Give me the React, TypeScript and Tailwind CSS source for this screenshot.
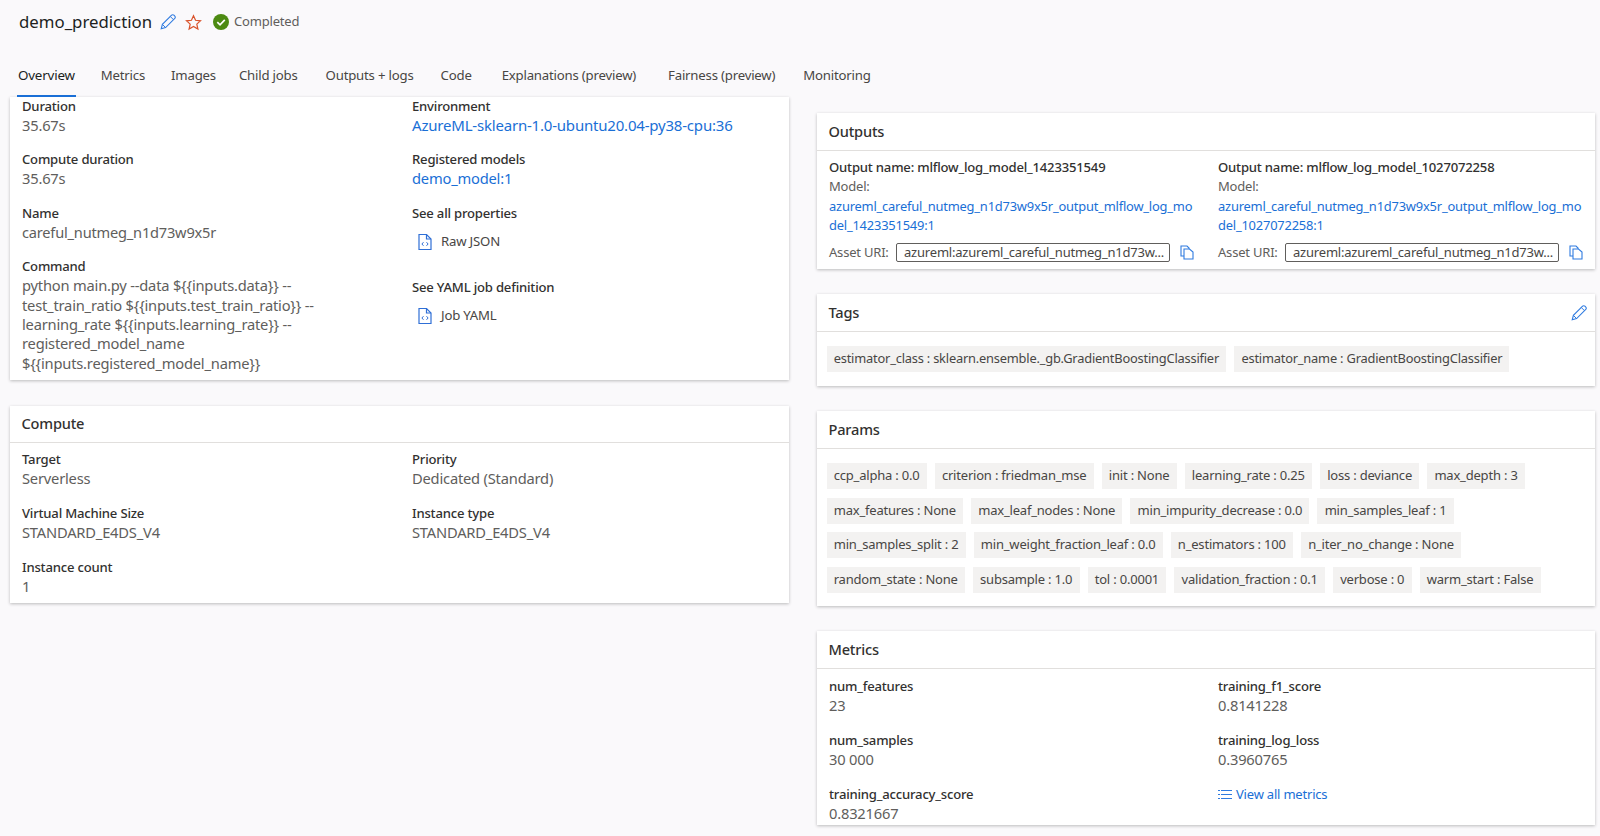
import React from "react";

const FileCode = () => (
  <svg width="16" height="18" viewBox="0 0 16 18" fill="none" className="shrink-0">
    <path d="M2 1.5h7.5l4.5 4.5v10.5H2z" stroke="#2f6fd6" strokeWidth="1.2" />
    <path d="M9.5 1.5V6H14" stroke="#2f6fd6" strokeWidth="1.2" />
    <path d="M6.5 9.2 4.9 11l1.6 1.8M9.5 9.2l1.6 1.8-1.6 1.8" stroke="#2f6fd6" strokeWidth="1" />
  </svg>
);

const CopyIcon = () => (
  <svg width="14" height="15" viewBox="0 0 14 15" fill="none" className="shrink-0">
    <path d="M1 1h6l2 2v8H1z" stroke="#2f7be0" strokeWidth="1.1" fill="#fff" />
    <path d="M4 4h5.5L13 7v7H4z" stroke="#2f7be0" strokeWidth="1.1" fill="#fff" />
  </svg>
);

const PencilIcon = ({ size = 16 }: { size?: number }) => (
  <svg width={size} height={size} viewBox="0 0 16 16" fill="none">
    <path d="M1.2 14.8 2.4 10.4 11.6 1.2a1.6 1.6 0 0 1 2.3 0l.9.9a1.6 1.6 0 0 1 0 2.3L5.6 13.6z" stroke="#2f7be0" strokeWidth="1.1" />
    <path d="M10.4 2.6l3 3M2.4 10.4l3.2 3.2" stroke="#2f7be0" strokeWidth="1" />
  </svg>
);

const F = ({ label, children, v = "text-[14.7px]" }: { label: string; children: React.ReactNode; v?: string }) => (
  <div>
    <div className="text-[13.1px] leading-[19px] font-medium text-[#323130]">{label}</div>
    <div className={`${v} leading-[19.4px] text-[#605e5c]`}>{children}</div>
  </div>
);

const Link = ({ children }: { children: React.ReactNode }) => (
  <span className="text-[#1a6fd6]">{children}</span>
);

const Card = ({ title, children, action, head = "h-[38px] pt-[1px]" }: { title: string; children: React.ReactNode; action?: React.ReactNode; head?: string }) => (
  <section className="bg-white shadow-[0_1px_3px_rgba(0,0,0,0.25)]">
    <div className={`${head} flex items-center justify-between pl-[11.5px] pr-[8px] border-b border-[#e1dfdd] text-[14.6px] font-medium text-[#323130]`}>
      <span>{title}</span>
      {action}
    </div>
    {children}
  </section>
);

const Chip = ({ children, s = "text-[13px]" }: { children: React.ReactNode; s?: string }) => (
  <span className={`h-[26px] flex items-center px-[7.2px] bg-[#f3f2f1] ${s} text-[#484644] whitespace-nowrap`}>{children}</span>
);

const tabs = ["Metrics", "Images", "Child jobs", "Outputs + logs", "Code", "Explanations (preview)", "Fairness (preview)", "Monitoring"];
const tabGaps = ["w-[26px]", "w-[26px]", "w-[23px]", "w-[28px]", "w-[27px]", "w-[30px]", "w-[32px]", "w-[28px]"];

const params = [
  ["ccp_alpha : 0.0", "criterion : friedman_mse", "init : None", "learning_rate : 0.25", "loss : deviance", "max_depth : 3"],
  ["max_features : None", "max_leaf_nodes : None", "min_impurity_decrease : 0.0", "min_samples_leaf : 1"],
  ["min_samples_split : 2", "min_weight_fraction_leaf : 0.0", "n_estimators : 100", "n_iter_no_change : None"],
  ["random_state : None", "subsample : 1.0", "tol : 0.0001", "validation_fraction : 0.1", "verbose : 0", "warm_start : False"],
];

const Output = ({ name, uri }: { name: string; uri: [string, string] }) => (
  <div className="w-[389px] shrink-0">
    <div className="text-[13.1px] leading-[19.4px] font-medium text-[#323130]">Output name: {name}</div>
    <div className="text-[13px] leading-[19.4px] text-[#605e5c]">Model:</div>
    <div className="text-[12.9px] leading-[19.4px] text-[#1a6fd6]">
      <div>{uri[0]}</div>
      <div>{uri[1]}</div>
    </div>
    <div className="flex items-center mt-[7px] text-[13px] text-[#605e5c]">
      <span className="w-[67px] shrink-0">Asset URI:</span>
      <span className="w-[274px] h-[19px] shrink-0 border border-[#605e5c] rounded-[2px] pl-[7px] flex items-center text-[#484644] whitespace-nowrap">azureml:azureml_careful_nutmeg_n1d73w...</span>
      <span className="ml-[10px]"><CopyIcon /></span>
    </div>
  </div>
);

export default function App() {
  return (
    <div className="w-[1600px] h-[836px] overflow-hidden bg-[#faf9fb] flex flex-col" style={{ fontFamily: '"Noto Sans", "Open Sans", sans-serif', letterSpacing: "-0.2px" }}>
      <header className="h-[97px] shrink-0 pl-[17px]">
        <div className="h-[44px] flex items-center pl-[2px]">
          <span className="text-[16.8px] text-[#201f1e] tracking-normal">demo_prediction</span>
          <span className="ml-[8px]"><PencilIcon /></span>
          <svg className="ml-[9px]" width="17" height="17" viewBox="0 0 24 24" fill="none" stroke="#d9532c" strokeWidth="1.7"><path d="M12 2.5l2.9 6.4 7 .7-5.2 4.7 1.5 6.9-6.2-3.6-6.2 3.6 1.5-6.9-5.2-4.7 7-.7z" /></svg>
          <svg className="ml-[11px]" width="16" height="16" viewBox="0 0 16 16"><circle cx="8" cy="8" r="8" fill="#4c8a12" /><path d="M4.3 8.2 7 10.8l4.8-5" stroke="#fff" strokeWidth="1.7" fill="none" /></svg>
          <span className="ml-[5px] text-[13px] text-[#605e5c]">Completed</span>
        </div>
        <nav className="flex h-[53px] pl-[1px] text-[13.2px] text-[#484644]">
          <div className="relative h-full flex items-center pt-[10px] text-[13.4px] text-[#201f1e]">
            Overview
            <span className="absolute left-[-1px] right-[-1px] bottom-0 h-[2px] bg-[#1a6fd6]" />
          </div>
          {tabs.map((t, i) => (
            <React.Fragment key={t}>
              <div className={`${tabGaps[i]} shrink-0`} />
              <div className="h-full flex items-center pt-[10px] whitespace-nowrap">{t}</div>
            </React.Fragment>
          ))}
        </nav>
      </header>

      <main className="flex pl-[10px] gap-[28px] items-start">
        <div className="w-[779px] flex flex-col gap-[26px]">
          <section className="bg-white shadow-[0_1px_3px_rgba(0,0,0,0.25)] h-[283px] pl-[12px] flex">
            <div className="w-[390px] flex flex-col gap-[15px]">
              <F label="Duration">35.67s</F>
              <F label="Compute duration">35.67s</F>
              <F label="Name" v="text-[14.6px]">careful_nutmeg_n1d73w9x5r</F>
              <F label="Command">
                python main.py --data ${"{{"}inputs.data{"}}"} --<br />
                test_train_ratio ${"{{"}inputs.test_train_ratio{"}}"} --<br />
                learning_rate ${"{{"}inputs.learning_rate{"}}"} --<br />
                registered_model_name<br />
                ${"{{"}inputs.registered_model_name{"}}"}
              </F>
            </div>
            <div className="flex flex-col gap-[15px]">
              <F label="Environment" v="text-[15px]"><Link>AzureML-sklearn-1.0-ubuntu20.04-py38-cpu:36</Link></F>
              <F label="Registered models"><Link>demo_model:1</Link></F>
              <div>
                <div className="text-[13.1px] leading-[19px] font-medium text-[#323130]">See all properties</div>
                <div className="flex items-center gap-[8px] h-[39px] pl-[5px] text-[13.2px] text-[#484644]"><FileCode />Raw JSON</div>
              </div>
              <div className="mt-[1px]">
                <div className="text-[13.1px] leading-[19px] font-medium text-[#323130]">See YAML job definition</div>
                <div className="flex items-center gap-[8px] h-[38px] pl-[5px] text-[13.2px] text-[#484644]"><FileCode />Job YAML</div>
              </div>
            </div>
          </section>

          <Card title="Compute" head="h-[37px]">
            <div className="flex pl-[12px] pt-[7px] h-[160px]">
              <div className="w-[390px] flex flex-col gap-[15.6px]">
                <F label="Target">Serverless</F>
                <F label="Virtual Machine Size">STANDARD_E4DS_V4</F>
                <F label="Instance count">1</F>
              </div>
              <div className="flex flex-col gap-[15.6px]">
                <F label="Priority">Dedicated (Standard)</F>
                <F label="Instance type">STANDARD_E4DS_V4</F>
              </div>
            </div>
          </Card>
        </div>

        <div className="w-[778px] pt-[16px] flex flex-col gap-[25px]">
          <Card title="Outputs">
            <div className="flex pl-[12px] pt-[7px] h-[118px]">
              <Output name="mlflow_log_model_1423351549" uri={["azureml_careful_nutmeg_n1d73w9x5r_output_mlflow_log_mo", "del_1423351549:1"]} />
              <Output name="mlflow_log_model_1027072258" uri={["azureml_careful_nutmeg_n1d73w9x5r_output_mlflow_log_mo", "del_1027072258:1"]} />
            </div>
          </Card>

          <Card title="Tags" action={<PencilIcon />}>
            <div className="flex gap-[8px] pl-[9.5px] pt-[14px] h-[54px]">
              <Chip s="text-[12.85px]">estimator_class : sklearn.ensemble._gb.GradientBoostingClassifier</Chip>
              <Chip s="text-[12.85px]">estimator_name : GradientBoostingClassifier</Chip>
            </div>
          </Card>

          <Card title="Params">
            <div className="flex flex-col gap-[8.5px] pl-[9.5px] pt-[14px] h-[157px]">
              {params.map((r, i) => (
                <div key={i} className="flex gap-[8px]">
                  {r.map((c) => <Chip key={c}>{c}</Chip>)}
                </div>
              ))}
            </div>
          </Card>

          <Card title="Metrics">
            <div className="flex pl-[12px] pt-[8px] h-[156px]">
              <div className="w-[389px] flex flex-col gap-[15.6px]">
                <F label="num_features">23</F>
                <F label="num_samples">30 000</F>
                <F label="training_accuracy_score">0.8321667</F>
              </div>
              <div className="flex flex-col gap-[15.6px]">
                <F label="training_f1_score">0.8141228</F>
                <F label="training_log_loss">0.3960765</F>
                <div className="flex items-center gap-[4px] h-[19px] text-[13px] text-[#1a6fd6]">
                  <svg width="14" height="11" viewBox="0 0 14 11" stroke="#2f7be0" strokeWidth="1"><path d="M3 1.5h11M3 5.5h11M3 9.5h11M0 1.5h2M0 5.5h2M0 9.5h2" /></svg>
                  View all metrics
                </div>
              </div>
            </div>
          </Card>
        </div>
      </main>
    </div>
  );
}
